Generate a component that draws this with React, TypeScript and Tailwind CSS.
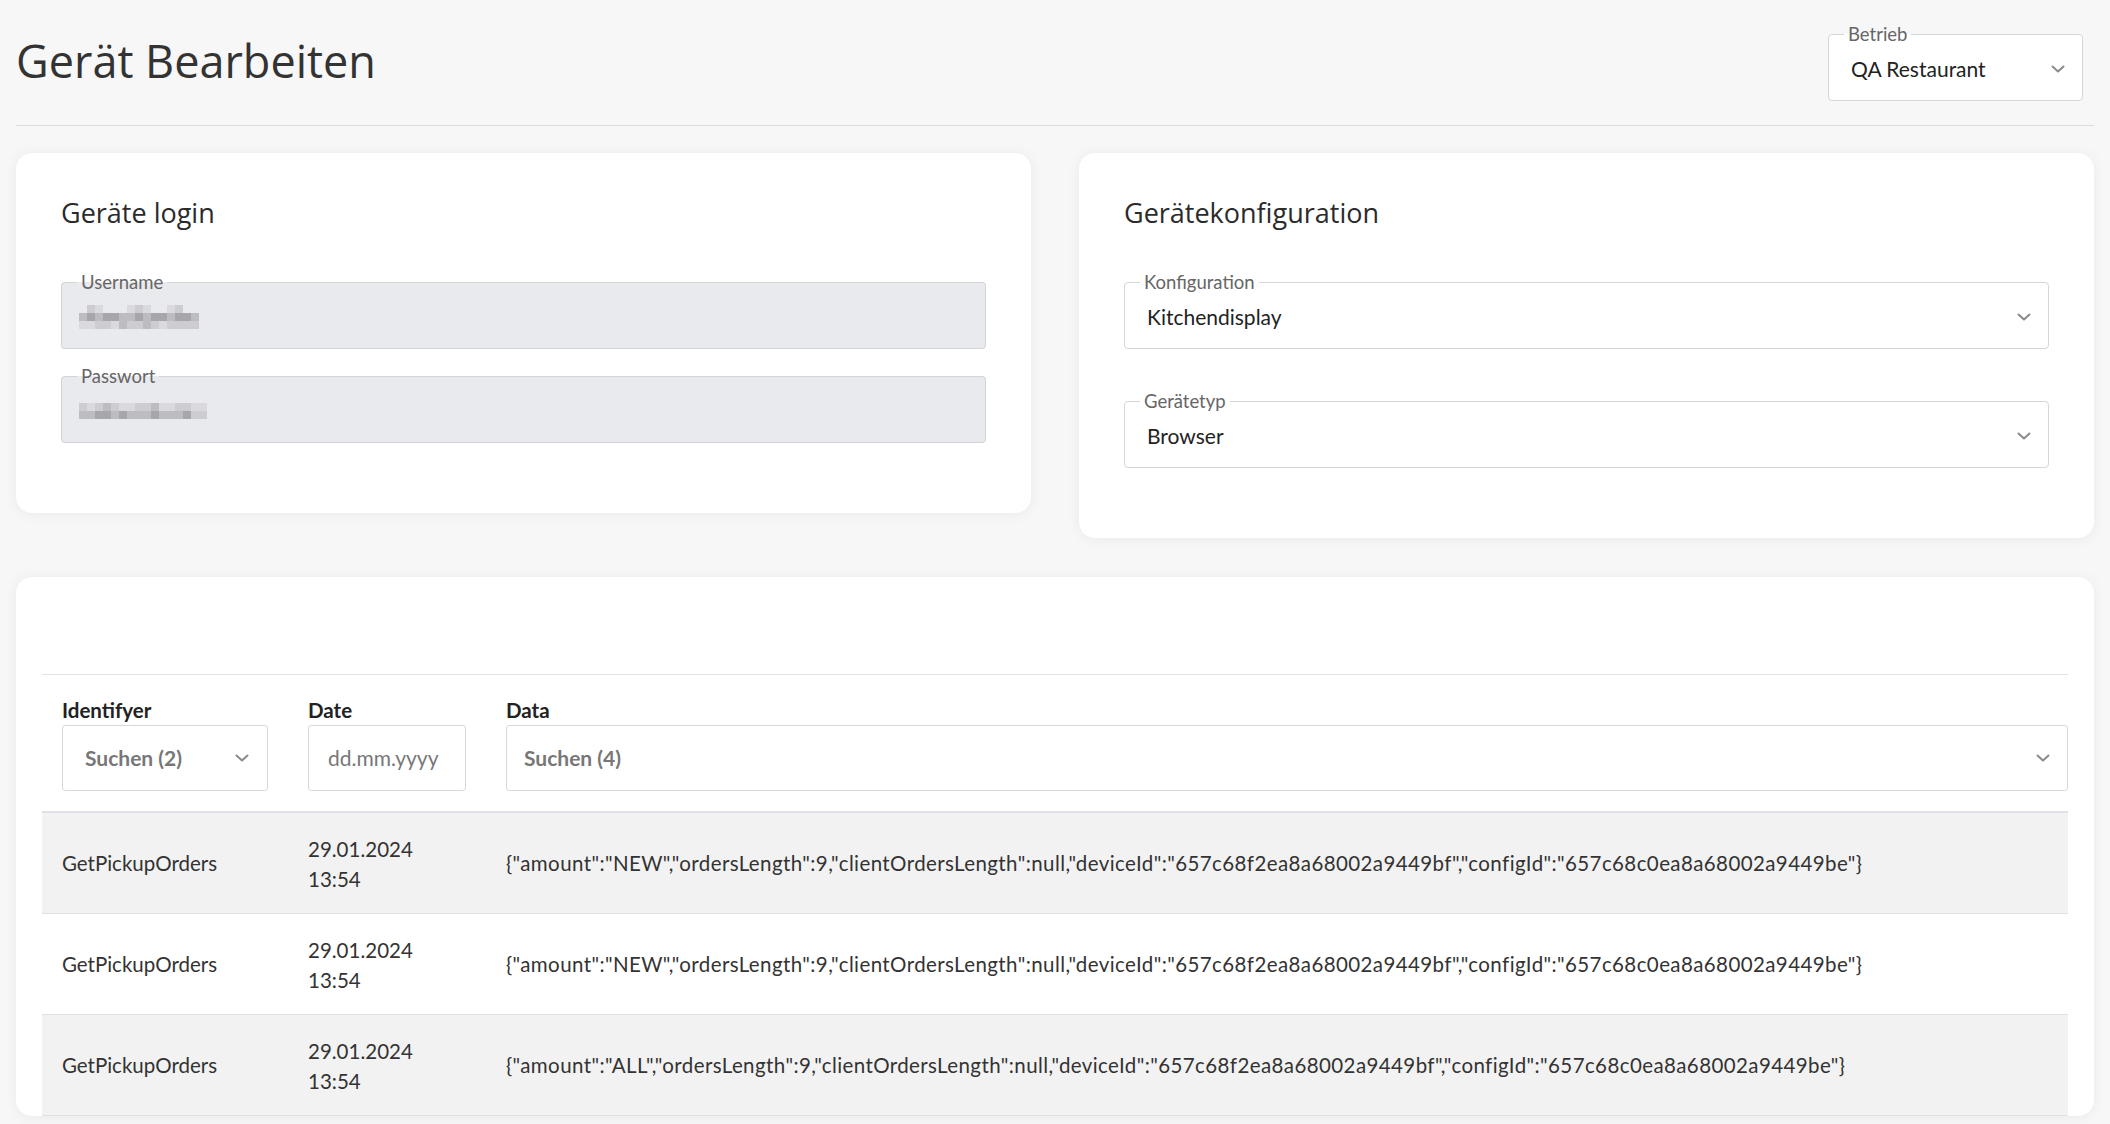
import type { ReactNode } from 'react'

const shade: Record<string, string> = {
  a: 'bg-[#a6a6ab]',
  b: 'bg-[#bdbdc1]',
  c: 'bg-[#cdcdd1]',
  d: 'bg-[#dadade]',
  '.': 'bg-transparent',
}

// pixelated placeholders for the hidden credentials
const userMask = ['.cd...dcd..dc..', 'babaabbabaabaab', 'ddccdbccbcdcccc']
const passMask = ['cdcbcddccbddccdd', 'bbaababbbabbbacc']

const rows = [
  {
    id: 'GetPickupOrders',
    date: '29.01.2024',
    time: '13:54',
    data: '{"amount":"NEW","ordersLength":9,"clientOrdersLength":null,"deviceId":"657c68f2ea8a68002a9449bf","configId":"657c68c0ea8a68002a9449be"}',
  },
  {
    id: 'GetPickupOrders',
    date: '29.01.2024',
    time: '13:54',
    data: '{"amount":"NEW","ordersLength":9,"clientOrdersLength":null,"deviceId":"657c68f2ea8a68002a9449bf","configId":"657c68c0ea8a68002a9449be"}',
  },
  {
    id: 'GetPickupOrders',
    date: '29.01.2024',
    time: '13:54',
    data: '{"amount":"ALL","ordersLength":9,"clientOrdersLength":null,"deviceId":"657c68f2ea8a68002a9449bf","configId":"657c68c0ea8a68002a9449be"}',
  },
]

function Chevron() {
  return (
    <svg width="14" height="8" viewBox="0 0 14 8" fill="none" aria-hidden="true">
      <path d="M1.5 1.5 7 6.5l5.5-5" stroke="#8a8a8a" strokeWidth="2" strokeLinecap="round" strokeLinejoin="round" />
    </svg>
  )
}

function Mosaic({ lines }: { lines: string[] }) {
  return (
    <div className="flex flex-col">
      {lines.map((line, r) => (
        <div key={r} className="flex">
          {line.split('').map((c, i) => (
            <span key={i} className={`block h-2 w-2 ${shade[c]}`} />
          ))}
        </div>
      ))}
    </div>
  )
}

function Field({
  label,
  disabled,
  children,
}: {
  label: string
  disabled?: boolean
  children: ReactNode
}) {
  return (
    <fieldset
      className={`rounded-[4px] border px-0 ${
        disabled ? 'border-[#d3d4d8] bg-[#e9eaee]' : 'border-[#d6d6d6] bg-white'
      }`}
    >
      <legend className="ml-[15px] px-[4px] text-[18.5px] leading-[18px] text-[#666]">{label}</legend>
      <div className="flex h-[57px] items-center justify-between pb-[5px] pl-[17px] pr-[17px]">{children}</div>
    </fieldset>
  )
}

function SelectField({ label, value }: { label: string; value: string }) {
  return (
    <Field label={label}>
      <span className="pl-[5px] text-[21px] text-[#222]">{value}</span>
      <Chevron />
    </Field>
  )
}

function Card({ title, children }: { title: string; children: ReactNode }) {
  return (
    <section className="rounded-2xl bg-white px-[45px] pb-[70px] pt-[42px] shadow-[0_1px_14px_rgba(0,0,0,0.06)]">
      <h2 className="font-['Open_Sans',sans-serif] text-[27px] leading-[36px] text-[#2b2b2b]">{title}</h2>
      {children}
    </section>
  )
}

export default function App() {
  return (
    <div className="min-h-screen bg-[#f7f7f7] px-4 font-['Lato',sans-serif] text-[#333]">
      <header className="flex h-[126px] items-start justify-between border-b border-[#dcdcdc] pr-[11px]">
        <h1 className="mt-[34px] font-['Open_Sans',sans-serif] text-[45px] leading-[54px] text-[#333]">
          Gerät Bearbeiten
        </h1>
        <div className="mt-[25px] w-[255px]">
          <SelectField label="Betrieb" value="QA Restaurant" />
        </div>
      </header>

      <div className="mt-[27px] grid grid-cols-2 items-start gap-12">
        <Card title="Geräte login">
          <div className="mt-[42px] flex flex-col gap-[18px]">
            <Field label="Username" disabled>
              <Mosaic lines={userMask} />
            </Field>
            <Field label="Passwort" disabled>
              <Mosaic lines={passMask} />
            </Field>
          </div>
        </Card>
        <Card title="Gerätekonfiguration">
          <div className="mt-[42px] flex flex-col gap-[43px]">
            <SelectField label="Konfiguration" value="Kitchendisplay" />
            <SelectField label="Gerätetyp" value="Browser" />
          </div>
        </Card>
      </div>

      <section className="mt-[39px] rounded-2xl bg-white px-[26px] pt-[97px] shadow-[0_1px_14px_rgba(0,0,0,0.06)]">
        <table className="w-full table-fixed border-collapse border-t border-[#e3e3e3] text-[20.5px]">
          <thead>
            <tr className="border-b-2 border-[#dee2e6]">
              <th className="w-[246px] px-5 pb-5 pt-[23px] text-left align-top">
                <div className="mb-[3px] text-[20.5px] font-bold leading-[24px] text-[#222]">Identifyer</div>
                <div className="flex h-[66px] items-center justify-between rounded-[3px] border border-[#d8d8d8] pl-[22px] pr-[18px]">
                  <span className="text-[21px] font-bold text-[#777]">Suchen (2)</span>
                  <Chevron />
                </div>
              </th>
              <th className="w-[198px] px-5 pb-5 pt-[23px] text-left align-top">
                <div className="mb-[3px] text-[20.5px] font-bold leading-[24px] text-[#222]">Date</div>
                <div className="flex h-[66px] items-center rounded-[3px] border border-[#d8d8d8] pl-[19px]">
                  <span className="text-[21px] font-normal text-[#777]">dd.mm.yyyy</span>
                </div>
              </th>
              <th className="pb-5 pl-5 pr-0 pt-[23px] text-left align-top">
                <div className="mb-[3px] text-[20.5px] font-bold leading-[24px] text-[#222]">Data</div>
                <div className="flex h-[66px] items-center justify-between rounded-[3px] border border-[#d8d8d8] pl-[17px] pr-[17px]">
                  <span className="text-[21px] font-bold text-[#777]">Suchen (4)</span>
                  <Chevron />
                </div>
              </th>
            </tr>
          </thead>
          <tbody>
            {rows.map((row, i) => (
              <tr key={i} className={`h-[101px] border-b border-[#dee2e6] ${i % 2 === 0 ? 'bg-[#f2f2f2]' : 'bg-white'}`}>
                <td className="px-5 pt-[2px] align-middle">{row.id}</td>
                <td className="px-5 pt-[2px] align-middle leading-[30px]">
                  {row.date}
                  <br />
                  {row.time}
                </td>
                <td className="whitespace-nowrap px-5 pt-[2px] align-middle tracking-[0.4px]">{row.data}</td>
              </tr>
            ))}
          </tbody>
        </table>
      </section>
    </div>
  )
}
